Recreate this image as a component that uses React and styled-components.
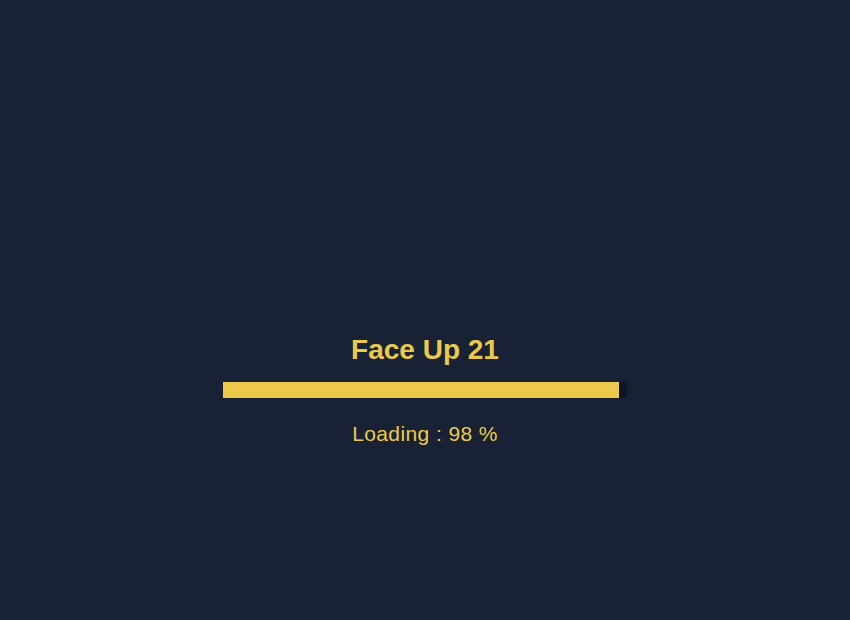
import React from "react";
import styled, { createGlobalStyle } from "styled-components";

const Global = createGlobalStyle`
  html, body { margin: 0; padding: 0; background: #182234; }
  body { font-family: "Liberation Sans", Arial, sans-serif; }
`;

const Screen = styled.div`
  width: 850px;
  height: 620px;
  background: #182234;
  display: flex;
  flex-direction: column;
  align-items: center;
  padding-top: 333px;
  box-sizing: border-box;
  color: #ecc94b;
`;

const Title = styled.h1`
  margin: 0;
  font-size: 28px;
  line-height: 34px;
  font-weight: 700;
`;

const Track = styled.div`
  margin-top: 15px;
  width: 404px;
  height: 16px;
  background: #0f1522;
`;

const Fill = styled.div`
  height: 100%;
  background: #ecc94b;
`;

const Status = styled.div`
  margin-top: 23px;
  font-size: 21px;
  letter-spacing: 0.4px;
  line-height: 26px;
`;

export default function App() {
  const pct = 98;
  return (
    <>
      <Global />
      <Screen>
        <Title>Face Up 21</Title>
        <Track>
          <Fill style={{ width: `${pct}%` }} />
        </Track>
        <Status>Loading : {pct} %</Status>
      </Screen>
    </>
  );
}
